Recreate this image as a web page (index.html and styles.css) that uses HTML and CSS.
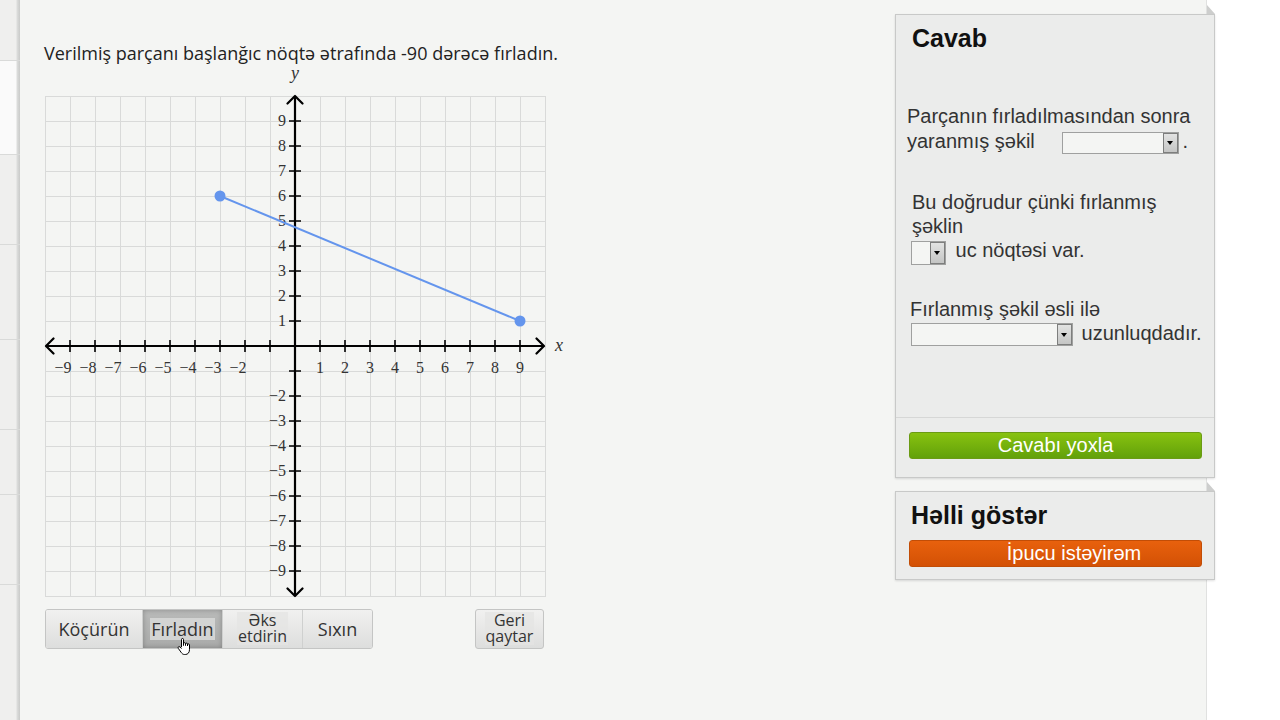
FILE: index.html
```html
<!DOCTYPE html>
<html lang="az">
<head>
<meta charset="utf-8">
<title>Fırlatma</title>
<link rel="stylesheet" href="styles.css">
</head>
<body>
<div class="page">
  <nav class="sidebar">
    <div class="sb-item sb-h61"></div>
    <div class="sb-item sb-h94 sb-active"></div>
    <div class="sb-item sb-h90"></div>
    <div class="sb-item sb-h95"></div>
    <div class="sb-item sb-h90"></div>
    <div class="sb-item sb-h65"></div>
    <div class="sb-item sb-h90"></div>
  </nav>
  <main class="main">
    <section class="exercise">
      <p class="question">Verilmiş parçanı başlanğıc nöqtə ətrafında -90 dərəcə fırladın.</p>
      <svg class="graph" width="530" height="540" viewBox="44 63 530 540" xmlns="http://www.w3.org/2000/svg">
        <path class="grid" d="M45.5 96V596M70.5 96V596M95.5 96V596M120.5 96V596M145.5 96V596M170.5 96V596M195.5 96V596M220.5 96V596M245.5 96V596M270.5 96V596M295.5 96V596M320.5 96V596M345.5 96V596M370.5 96V596M395.5 96V596M420.5 96V596M445.5 96V596M470.5 96V596M495.5 96V596M520.5 96V596M545.5 96V596M45 96.5H546M45 121.5H546M45 146.5H546M45 171.5H546M45 196.5H546M45 221.5H546M45 246.5H546M45 271.5H546M45 296.5H546M45 321.5H546M45 346.5H546M45 371.5H546M45 396.5H546M45 421.5H546M45 446.5H546M45 471.5H546M45 496.5H546M45 521.5H546M45 546.5H546M45 571.5H546M45 596.5H546"/>
        <path class="axis" d="M47 346H543M295 98V594"/>
        <path class="axis" d="M53.5 338.5L46 346L53.5 353.5M536.5 338.5L544 346L536.5 353.5M287.5 103.5L295 96L302.5 103.5M287.5 588.5L295 596L302.5 588.5"/>
        <path class="tick" d="M70 340V352M95 340V352M120 340V352M145 340V352M170 340V352M195 340V352M220 340V352M245 340V352M270 340V352M320 340V352M345 340V352M370 340V352M395 340V352M420 340V352M445 340V352M470 340V352M495 340V352M520 340V352M289 121H301M289 146H301M289 171H301M289 196H301M289 221H301M289 246H301M289 271H301M289 296H301M289 321H301M289 371H301M289 396H301M289 421H301M289 446H301M289 471H301M289 496H301M289 521H301M289 546H301M289 571H301"/>
        <g class="lbl-x">
          <text x="63" y="373">−9</text><text x="88" y="373">−8</text><text x="113" y="373">−7</text><text x="138" y="373">−6</text><text x="163" y="373">−5</text><text x="188" y="373">−4</text><text x="213" y="373">−3</text><text x="238" y="373">−2</text>
          <text x="320" y="373">1</text><text x="345" y="373">2</text><text x="370" y="373">3</text><text x="395" y="373">4</text><text x="420" y="373">5</text><text x="445" y="373">6</text><text x="470" y="373">7</text><text x="495" y="373">8</text><text x="520" y="373">9</text>
        </g>
        <g class="lbl-y">
          <text x="286" y="126">9</text><text x="286" y="151">8</text><text x="286" y="176">7</text><text x="286" y="201">6</text><text x="286" y="226">5</text><text x="286" y="251">4</text><text x="286" y="276">3</text><text x="286" y="301">2</text><text x="286" y="326">1</text>
          <text x="286" y="401">−2</text><text x="286" y="426">−3</text><text x="286" y="451">−4</text><text x="286" y="476">−5</text><text x="286" y="501">−6</text><text x="286" y="526">−7</text><text x="286" y="551">−8</text><text x="286" y="576">−9</text>
        </g>
        <text class="var" x="555" y="351">x</text>
        <text class="var" x="291" y="79">y</text>
        <line class="seg" x1="220" y1="196" x2="520" y2="321"/>
        <circle class="pt" cx="220" cy="196" r="5.5"/>
        <circle class="pt" cx="520" cy="321" r="5.5"/>
      </svg>
      <div class="toolbar">
        <div class="btn-group">
          <button class="tool w96"><span class="lbl">Köçürün</span></button>
          <button class="tool w80 pressed"><span class="lbl">Fırladın</span>
            <svg class="cursor" width="18" height="19" viewBox="0 0 18 19" xmlns="http://www.w3.org/2000/svg"><path d="M5.5 10V2.4c0-1.3 2-1.3 2 0V8.5V6.6c0-1.2 2-1.2 2 0V8.5V7c0-1.2 2-1.2 2 0V9V7.8c0-1.2 2-1.2 2 0V12.5c0 3-1.6 5-4.2 5H8.6c-1.8 0-2.6-0.9-3.5-2.2L2.3 11.4c-0.8-1.2 0.7-2.4 1.7-1.4L5.5 11.6" fill="#fff" stroke="#000" stroke-width="1" stroke-linejoin="round"/></svg>
          </button>
          <button class="tool w80 two"><span class="lbl">Əks<br>etdirin</span></button>
          <button class="tool w70"><span class="lbl">Sıxın</span></button>
        </div>
        <button class="tool undo two"><span class="lbl">Geri<br>qaytar</span></button>
      </div>
    </section>
    <aside class="answer-col">
      <div class="panel answer">
        <div class="panel-body">
          <h2 class="panel-title">Cavab</h2>
          <p class="q q1">Parçanın fırladılmasından sonra<br>yaranmış şəkil <span class="dd dd1"><span class="arr"></span></span>.</p>
          <p class="q q2">Bu doğrudur çünki fırlanmış<br>şəklin<br><span class="dd dd2"><span class="arr"></span></span> uc nöqtəsi var.</p>
          <p class="q q3">Fırlanmış şəkil əsli ilə<br><span class="dd dd3"><span class="arr"></span></span> uzunluqdadır.</p>
        </div>
        <div class="panel-foot">
          <button class="action green">Cavabı yoxla</button>
        </div>
      </div>
      <div class="panel hint">
        <h2 class="panel-title">Həlli göstər</h2>
        <button class="action orange">İpucu istəyirəm</button>
      </div>
    </aside>
  </main>
</div>
</body>
</html>
```

FILE: styles.css
```css
html, body {
  margin: 0;
  padding: 0;
}
body {
  width: 1280px;
  height: 720px;
  overflow: hidden;
  background: #ffffff;
  font-family: "Liberation Sans", Arial, sans-serif;
}
.page {
  display: flex;
  height: 720px;
}

/* left sidebar strip */
.sidebar {
  width: 20px;
  flex-shrink: 0;
  display: flex;
  flex-direction: column;
  background: linear-gradient(to right, #efefee 0, #efefee 16px, #dcdddc 17px, #c9cac9 20px);
}
.sb-item {
  flex-shrink: 0;
  box-sizing: border-box;
  border-bottom: 1px solid #d9dad9;
}
.sb-active {
  background: linear-gradient(to right, #fafafa 0, #fafafa 16px, #dcdddc 17px, #c9cac9 20px);
}
.sb-h61 { height: 61px; }
.sb-h94 { height: 94px; }
.sb-h90 { height: 90px; }
.sb-h95 { height: 95px; }
.sb-h65 { height: 65px; }

/* main content */
.main {
  width: 1187px;
  flex-shrink: 0;
  box-sizing: border-box;
  display: flex;
  padding-left: 24px;
  background: #f4f5f3;
  border-right: 1px solid #e0e1e0;
}
.exercise {
  width: 851px;
  flex-shrink: 0;
  padding-top: 43px;
}
.question {
  margin: 0;
  font-family: "Open Sans", "Noto Sans", sans-serif;
  font-size: 18px;
  line-height: 20px;
  color: #222;
}
.graph {
  display: block;
}
.grid {
  fill: none;
  stroke: #d9dad9;
  stroke-width: 1;
}
.axis {
  fill: none;
  stroke: #000;
  stroke-width: 2.2;
  stroke-linecap: round;
  stroke-linejoin: round;
}
.tick {
  fill: none;
  stroke: #000;
  stroke-width: 1.6;
}
.lbl-x text,
.lbl-y text {
  font-family: "Liberation Serif", "DejaVu Serif", serif;
  font-size: 16px;
  fill: #333;
}
.lbl-x text {
  text-anchor: middle;
}
.lbl-y text {
  text-anchor: end;
}
.var {
  font-family: "Liberation Serif", "DejaVu Serif", serif;
  font-style: italic;
  font-size: 18px;
  fill: #333;
}
.seg {
  stroke: #6495ed;
  stroke-width: 2;
}
.pt {
  fill: #6495ed;
}

/* toolbar */
.toolbar {
  display: flex;
  margin-top: 6px;
  margin-left: 1px;
}
.btn-group {
  display: flex;
  height: 40px;
  box-sizing: border-box;
  border: 1px solid #c4c5c4;
  border-radius: 3px;
}
.tool {
  position: relative;
  height: 100%;
  padding: 0;
  margin: 0;
  border: 0;
  border-left: 1px solid #cfd0cf;
  background: linear-gradient(#f1f1f0, #dddedd);
  font-family: "Open Sans", "Noto Sans", sans-serif;
  font-size: 18px;
  line-height: 22px;
  color: #333;
  box-sizing: border-box;
}
.btn-group .tool:first-child {
  border-left: 0;
  border-radius: 2px 0 0 2px;
}
.btn-group .tool:last-child {
  border-radius: 0 2px 2px 0;
}
.w96 { width: 96px; }
.w80 { width: 80px; }
.w70 { width: 70px; }
.lbl {
  display: inline-block;
  padding: 0 1px;
}
.two .lbl {
  font-size: 16px;
  line-height: 16px;
  padding-bottom: 1px;
  background: rgba(228, 228, 227, 0.7);
}
.pressed {
  background: linear-gradient(#b9bab9, #a9aaa9);
  box-shadow: inset 0 0 5px rgba(0, 0, 0, 0.25);
}
.pressed .lbl {
  background: #d3d4d3;
}
.cursor {
  position: absolute;
  left: 33px;
  top: 27px;
}
.undo {
  width: 69px;
  height: 40px;
  margin-left: 102px;
  border: 1px solid #c4c5c4;
  border-radius: 3px;
}

/* right answer column */
.answer-col {
  width: 320px;
  flex-shrink: 0;
  padding-top: 14px;
}
.panel {
  position: relative;
  box-sizing: border-box;
  background: #ebeceb;
  border: 1px solid #c8c9c8;
  box-shadow: 0 1px 2px rgba(0, 0, 0, 0.12);
}
.panel::before {
  content: "";
  position: absolute;
  right: -1px;
  top: -10px;
  width: 0;
  height: 0;
  border-bottom: 9px solid #cdcecd;
  border-right: 8px solid transparent;
}
.answer {
  height: 464px;
  display: flex;
  flex-direction: column;
}
.panel-body {
  flex: 1;
  padding: 0 12px 0 11px;
}
.panel-title {
  margin: 9px 0 0 5px;
  font-family: "Liberation Sans", Arial, sans-serif;
  font-weight: bold;
  font-size: 25px;
  line-height: 28px;
  color: #111;
}
.q {
  margin: 0;
  font-family: "Liberation Sans", Arial, sans-serif;
  font-size: 20px;
  line-height: 25px;
  color: #333;
}
.q1 { margin-top: 52px; }
.q2 { margin-top: 36px; margin-left: 5px; line-height: 24px; }
.q3 { margin-top: 32px; margin-left: 3px; line-height: 24px; }
.dd {
  position: relative;
  display: inline-block;
  box-sizing: border-box;
  border: 1px solid #9fa09f;
  background: #f4f5f3;
  vertical-align: -6px;
}
.dd1 { width: 117px; height: 22px; margin-left: 22px; margin-right: 3px; }
.dd2 { width: 35px; height: 24px; margin-left: -1px; margin-right: 4px; vertical-align: -8px; }
.dd3 { width: 162px; height: 23px; margin-left: 1px; margin-right: 3px; }
.dd .arr {
  position: absolute;
  right: 0;
  top: 0;
  bottom: 0;
  width: 15px;
  border: 1px solid #7d7e7d;
  box-sizing: border-box;
  background: linear-gradient(#e2e3e2, #c4c5c4);
}
.dd .arr::after {
  content: "";
  position: absolute;
  left: 3px;
  top: 50%;
  margin-top: -2px;
  border-left: 3.5px solid transparent;
  border-right: 3.5px solid transparent;
  border-top: 4px solid #000;
}
.panel-foot {
  border-top: 1px solid #d6d7d6;
  padding: 14px 12px 18px 13px;
}
.action {
  display: block;
  width: 100%;
  height: 27px;
  margin: 0;
  padding: 0;
  border-radius: 3px;
  font-family: "Liberation Sans", Arial, sans-serif;
  font-size: 20px;
  line-height: 25px;
  color: #fff;
  text-align: center;
}
.green {
  border: 1px solid #6b9b14;
  background: linear-gradient(#88c210, #62a10a);
}
.hint {
  margin-top: 13px;
  padding: 0 12px 12px 13px;
}
.hint .panel-title {
  margin: 9px 0 0 2px;
}
.orange {
  margin-top: 11px;
  padding-left: 37px;
  border: 1px solid #c24d06;
  background: linear-gradient(#e8610d, #d35105);
}
```
